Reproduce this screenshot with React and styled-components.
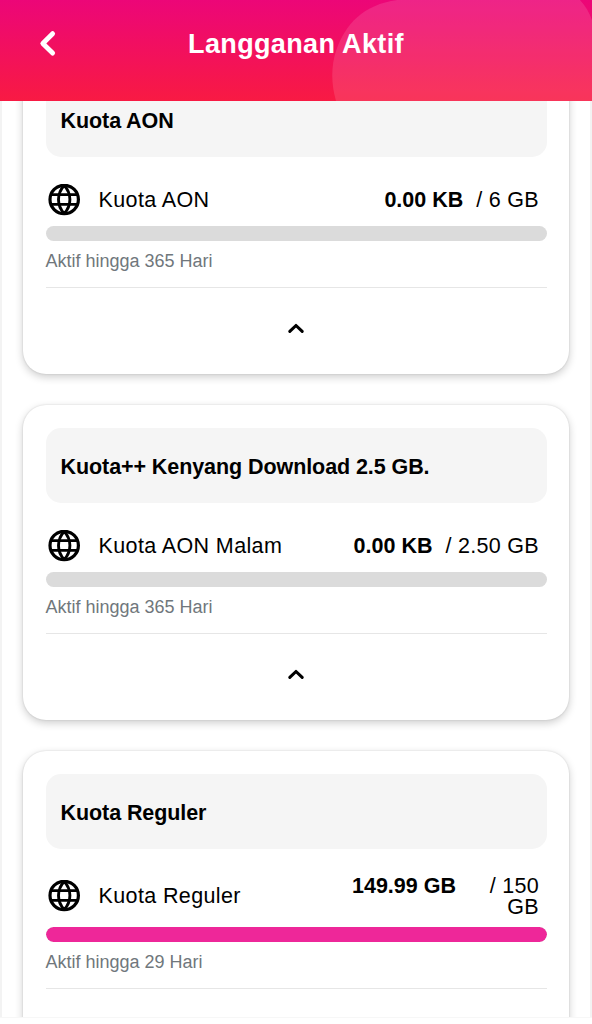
import React from "react";
import styled, { createGlobalStyle } from "styled-components";

const packages = [
  {
    title: "Kuota AON",
    name: "Kuota AON",
    remaining: "0.00 KB",
    total: "6 GB",
    percent: 0,
    expiry: "Aktif hingga 365 Hari",
  },
  {
    title: "Kuota++ Kenyang Download 2.5 GB.",
    name: "Kuota AON Malam",
    remaining: "0.00 KB",
    total: "2.50 GB",
    percent: 0,
    expiry: "Aktif hingga 365 Hari",
  },
  {
    title: "Kuota Reguler",
    name: "Kuota Reguler",
    remaining: "149.99 GB",
    total: "150 GB",
    percent: 100,
    expiry: "Aktif hingga 29 Hari",
  },
];

const GlobeIcon = () => (
  <svg width="32" height="32" viewBox="0 0 32 32" fill="none" stroke="#000">
    <circle cx="16.2" cy="15.5" r="14.2" strokeWidth="3.2" />
    <path
      d="M16.2 1.5C8.6 9.5 8.6 21.5 16.2 29.5M16.2 1.5C23.8 9.5 23.8 21.5 16.2 29.5"
      strokeWidth="2.9"
    />
    <path d="M3 10.6H29.4M3 20.4H29.4" strokeWidth="2.8" />
  </svg>
);

const BackIcon = () => (
  <svg width="18" height="28" viewBox="0 0 18 28" fill="none">
    <path
      d="M13.6 3.7L3.8 13.4L13.6 23.1"
      stroke="#fff"
      strokeWidth="4.9"
      strokeLinecap="round"
      strokeLinejoin="round"
    />
  </svg>
);

const ChevronUp = () => (
  <svg width="18" height="12" viewBox="0 0 18 12" fill="none">
    <path
      d="M2.8 8.4L9 2.5L15.2 8.4"
      stroke="#000"
      strokeWidth="3.1"
      strokeLinecap="round"
      strokeLinejoin="round"
    />
  </svg>
);

const PackageCard = ({ item }) => (
  <Card>
    <CardTitle>{item.title}</CardTitle>
    <QuotaRow>
      <GlobeIcon />
      <QuotaName>{item.name}</QuotaName>
      <Amount>
        <Remaining>{item.remaining}</Remaining>
        <Total>/ {item.total}</Total>
      </Amount>
    </QuotaRow>
    <Bar>
      <BarFill style={{ width: `${item.percent}%` }} />
    </Bar>
    <Expiry>{item.expiry}</Expiry>
    <ToggleBtn aria-label="Tutup">
      <ChevronUp />
    </ToggleBtn>
  </Card>
);

const App = () => {
  return (
    <Screen>
      <GlobalStyle />
      <Header>
        <HeaderShape viewBox="0 0 592 101" preserveAspectRatio="none">
          <path
            d="M336 101C331 84 331 66 336 51C346 21 368 0 410 -1H579C585 5 589 12 592 20V101Z"
            fill="#fff"
            fillOpacity="0.12"
          />
        </HeaderShape>
        <BackBtn aria-label="Kembali">
          <BackIcon />
        </BackBtn>
        <HeaderTitle>Langganan Aktif</HeaderTitle>
      </Header>
      <Content>
        <CardList>
          {packages.map((item) => (
            <PackageCard key={item.title} item={item} />
          ))}
        </CardList>
      </Content>
      <BottomEdge />
    </Screen>
  );
};

const GlobalStyle = createGlobalStyle`
  * {
    box-sizing: border-box;
  }
  body {
    margin: 0;
    background: #fff;
    font-family: "Liberation Sans", Arial, sans-serif;
    color: #000;
  }
  button {
    border: 0;
    padding: 0;
    background: none;
  }
  svg {
    display: block;
    flex-shrink: 0;
  }
`;

const Screen = styled.div`
  display: flex;
  flex-direction: column;
  width: 592px;
  height: 1024px;
  overflow: hidden;
`;

const Header = styled.header`
  position: relative;
  display: grid;
  grid-template-columns: 96px 1fr 96px;
  align-items: center;
  flex-shrink: 0;
  height: 101px;
  padding-bottom: 14px;
  background: linear-gradient(#ec0678, #f81a43);
`;

const HeaderShape = styled.svg`
  position: absolute;
  top: 0;
  left: 0;
  width: 592px;
  height: 101px;
`;

const BackBtn = styled.button`
  display: flex;
  justify-content: center;
`;

const HeaderTitle = styled.h1`
  position: relative;
  margin: 0;
  padding-top: 1px;
  color: #fff;
  font-size: 27px;
  line-height: 32px;
  letter-spacing: 0.35px;
  text-align: center;
`;

const Content = styled.main`
  flex: 1;
  min-height: 0;
  overflow: hidden;
  border: solid #f3f3f3;
  border-width: 0 2px;
`;

const CardList = styled.div`
  display: flex;
  flex-direction: column;
  gap: 31px;
  margin-top: -42px;
  padding: 0 21px;
`;

const Card = styled.section`
  padding: 23px 22.5px 0;
  border-radius: 23px;
  background: #fff;
  box-shadow: 0 3px 8px rgba(0, 0, 0, 0.2), 0 0 2px rgba(0, 0, 0, 0.14);
`;

const CardTitle = styled.h2`
  display: flex;
  align-items: center;
  height: 75px;
  margin: 0;
  padding: 3px 15px 0;
  border-radius: 15px;
  background: #f5f5f5;
  font-size: 21.5px;
  letter-spacing: -0.08px;
`;

const QuotaRow = styled.div`
  display: flex;
  align-items: center;
  min-height: 69px;
  padding: 25.5px 7.5px 9.5px 2.5px;
  font-size: 21.5px;
  line-height: 21.5px;
`;

const QuotaName = styled.span`
  flex: 1;
  margin-left: 18.5px;
  padding-top: 2px;
  letter-spacing: 0.38px;
`;

const Amount = styled.div`
  display: flex;
  max-width: 187px;
  margin: 1px 0 -1px;
`;

const Remaining = styled.b`
  white-space: nowrap;
`;

const Total = styled.span`
  margin-left: 13px;
  letter-spacing: 0.3px;
  text-align: right;
`;

const Bar = styled.div`
  height: 15px;
  border-radius: 8px;
  background: #dbdbdb;
  overflow: hidden;
`;

const BarFill = styled.div`
  height: 100%;
  border-radius: 8px;
  background: #ee2799;
`;

const Expiry = styled.p`
  height: 47px;
  margin: 0;
  padding-top: 10px;
  border-bottom: 1px solid #e6e6e6;
  color: #70777c;
  font-size: 18px;
  line-height: 21px;
`;

const ToggleBtn = styled.button`
  display: flex;
  justify-content: center;
  align-items: center;
  width: 100%;
  height: 86px;
  padding-bottom: 5px;
`;

const BottomEdge = styled.div`
  flex-shrink: 0;
  height: 7px;
  border-top: 1px solid #f7f7f7;
  background: #fff;
`;

export default App;
